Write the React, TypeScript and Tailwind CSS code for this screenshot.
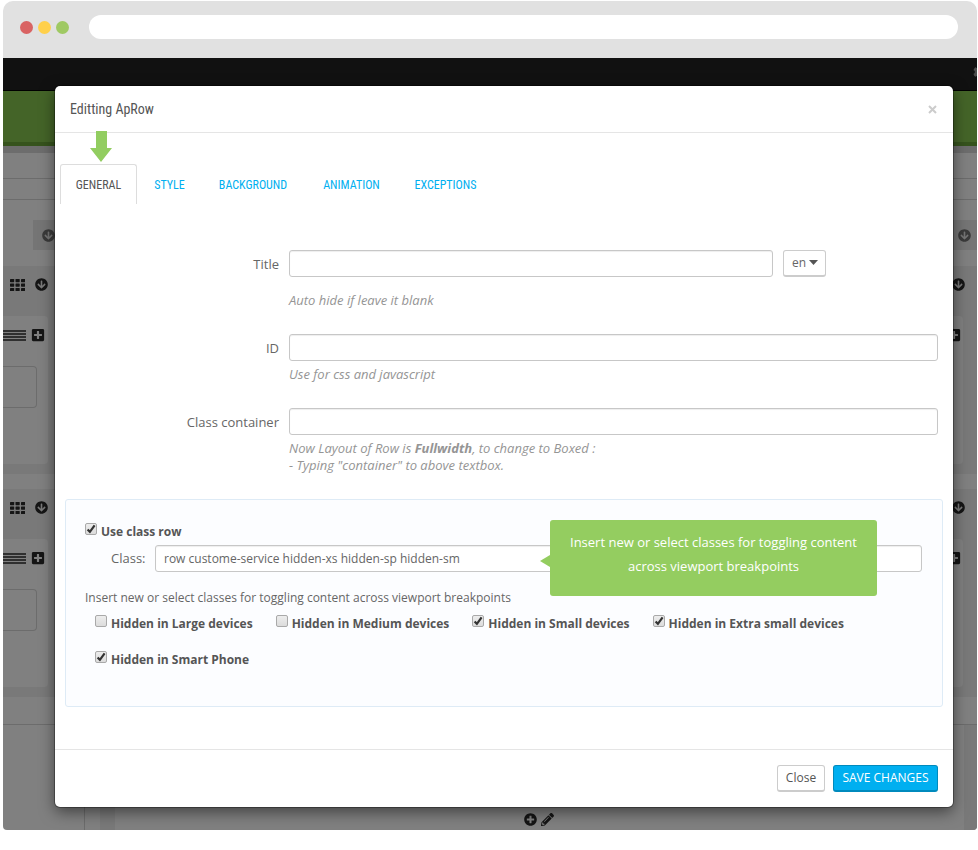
import { useState } from "react";
import type { ReactNode } from "react";
import clsx from "clsx";
import {
  FaArrowCircleDown,
  FaCog,
  FaPencilAlt,
  FaPlusCircle,
  FaPlusSquare,
} from "react-icons/fa";

const tabs = [
  { id: "general", label: "General", width: "w-[77px]" },
  { id: "style", label: "Style", width: "w-[61px]" },
  { id: "background", label: "Background", width: "w-[102px]" },
  { id: "animation", label: "Animation", width: "w-[91px]" },
  { id: "exceptions", label: "Exceptions", width: "w-[93px]" },
];

const breakpoints = [
  { id: "hidden-lg", label: "Hidden in Large devices", checked: false },
  { id: "hidden-md", label: "Hidden in Medium devices", checked: false },
  { id: "hidden-sm", label: "Hidden in Small devices", checked: true },
  { id: "hidden-xs", label: "Hidden in Extra small devices", checked: true },
  { id: "hidden-sp", label: "Hidden in Smart Phone", checked: true },
];

const condensed =
  "font-['Ubuntu_Condensed','Roboto_Condensed','Open_Sans_Condensed','Liberation_Sans_Narrow',sans-serif]";

const inputClass =
  "h-[27px] w-full rounded-[3px] border border-[#c7c7c7] bg-white px-2 text-[12px] text-[#666] shadow-[inset_0_1px_1px_rgba(0,0,0,0.07)] outline-none focus:border-[#66afe9]";

const GridIcon = () => (
  <svg viewBox="0 0 15 12" className="h-3 w-[15px]" fill="currentColor" aria-hidden="true">
    {[0, 5.5, 11].map((x) =>
      [0, 4.5, 9].map((y) => (
        <rect key={`${x}-${y}`} x={x} y={y} width="4.2" height="3.2" rx="0.6" />
      )),
    )}
  </svg>
);

const DragLines = () => (
  <span className="flex w-[23px] flex-col gap-px" aria-hidden="true">
    <span className="h-0.5 bg-[#303030]" />
    <span className="h-0.5 bg-[#303030]" />
    <span className="h-0.5 bg-[#303030]" />
    <span className="h-0.5 bg-[#303030]" />
  </span>
);

const CheckBox = ({
  id,
  label,
  defaultChecked,
}: {
  id: string;
  label: string;
  defaultChecked: boolean;
}) => (
  <div className="flex items-start gap-1">
    <span className="relative block h-3 w-3">
      <input
        id={id}
        type="checkbox"
        defaultChecked={defaultChecked}
        className="peer block h-3 w-3 appearance-none rounded-[2px] border border-[#a9a9a9] bg-linear-to-b from-[#ededed] to-[#dcdcdc]"
      />
      <svg
        viewBox="0 0 12 12"
        className="pointer-events-none absolute inset-0 hidden h-3 w-3 peer-checked:block"
        fill="none"
        stroke="#333"
        strokeWidth="2.2"
        aria-hidden="true"
      >
        <path d="M2.6 6.4 4.9 8.8 9.6 2.4" />
      </svg>
    </span>
    <label htmlFor={id} className="text-[12px] leading-[18px] font-bold text-[#555]">
      {label}
    </label>
  </div>
);

const Field = ({
  id,
  label,
  help,
  className,
  children,
}: {
  id: string;
  label: string;
  help: ReactNode;
  className?: string;
  children: ReactNode;
}) => (
  <div className={clsx("grid grid-cols-[214px_1fr] gap-x-[10px]", className)}>
    <label htmlFor={id} className="text-right text-[13px] leading-7 text-[#666]">
      {label}
    </label>
    <div>{children}</div>
    <p className="col-start-2 text-[13px] leading-[17px] text-[#959595] italic">{help}</p>
  </div>
);

const BuilderRow = () => (
  <div className="h-[208px] shrink-0 bg-[#797979] pr-[14px] text-[#151515]">
    <div className="flex h-[50px] items-start justify-between pt-3">
      <div className="flex items-center gap-[10px] pl-[7px]">
        <GridIcon />
        <FaArrowCircleDown className="size-[13px]" />
      </div>
      <FaArrowCircleDown className="mr-[-2px] size-[13px]" />
    </div>
    <div className="flex h-[148px] justify-between">
      <div className="w-[45px] rounded-r-[4px] bg-[#808080] pt-3">
        <div className="flex items-center gap-[5px]">
          <DragLines />
          <FaPlusSquare className="size-[14px]" />
        </div>
        <div className="mt-6 h-[42px] w-[34px] rounded-r-[4px] border border-l-0 border-[#6c6c6c]" />
      </div>
      <div className="flex w-[45px] justify-end rounded-r-[4px] bg-[#808080] pt-3 pr-[2px]">
        <FaPlusSquare className="size-[14px]" />
      </div>
    </div>
  </div>
);

const BuilderBackdrop = () => (
  <div
    className="col-start-1 row-start-1 flex min-h-0 flex-col overflow-hidden rounded-b-[4px] bg-[#808080]"
    aria-hidden="true"
  >
    <div className="flex h-[33px] shrink-0 justify-end border-b border-black bg-[#111] pt-[7px]">
      <FaCog className="mr-[-10px] size-[14px] text-[#4c4c4c]" />
    </div>
    <div className="h-[55px] shrink-0 border-b-4 border-[#36531d] bg-[#446428]" />
    <div className="h-[7px] shrink-0 bg-[#6d6d6d]" />
    <div className="h-[26px] shrink-0 border-b border-[#6c6c6c]" />
    <div className="h-[21px] shrink-0 border-b border-[#6c6c6c]" />
    <div className="mt-5 mb-4 ml-[30px] flex h-[30px] shrink-0 items-center justify-between bg-[#757575] pr-[6px] pl-[9px] text-[#3a3a3a]">
      <FaArrowCircleDown className="size-[13px]" />
      <FaArrowCircleDown className="size-[13px]" />
    </div>
    <BuilderRow />
    <div className="h-[15px] shrink-0" />
    <BuilderRow />
    <div className="h-7 shrink-0 border-b border-[#6c6c6c]" />
    <div className="flex flex-1 pl-[81px]">
      <div className="w-4 border-l border-[#6c6c6c]" />
      <div className="w-[15px] bg-[#797979]" />
      <div className="flex flex-1 items-end justify-center gap-1 pr-[2px] pb-1 text-[#151515]">
        <FaPlusCircle className="size-[13px]" />
        <FaPencilAlt className="size-[13px]" />
      </div>
      <div className="w-[13px] bg-[#797979]" />
    </div>
  </div>
);

export default function App() {
  const [activeTab, setActiveTab] = useState("general");

  return (
    <main className="min-h-screen bg-white pt-px pr-px pb-5 pl-[3px] font-['Open_Sans',sans-serif] text-[#555]">
      <header className="flex h-[57px] items-start rounded-t-[10px] bg-[#e1e1e1] pt-[14px] pr-[19px] pl-[17px]">
        <div className="mt-[6px] mr-5 flex gap-[5px]">
          <span className="size-[13px] rounded-full bg-[#d96363]" />
          <span className="size-[13px] rounded-full bg-[#ffd04b]" />
          <span className="size-[13px] rounded-full bg-[#9fc963]" />
        </div>
        <input
          type="text"
          aria-label="Address"
          className="h-6 min-w-0 flex-1 rounded-full bg-white px-4 text-[13px] outline-none"
        />
      </header>

      <div className="grid">
        <BuilderBackdrop />

        <div
          role="dialog"
          aria-labelledby="dialog-title"
          className="relative col-start-1 row-start-1 mt-7 mr-6 mb-[23px] ml-[52px] rounded-[5px] bg-white shadow-[0_5px_15px_rgba(0,0,0,0.5),0_0_0_1px_rgba(0,0,0,0.3)]"
        >
          <div className="flex h-[47px] items-center justify-between border-b border-[#e5e5e5] pr-4 pl-[15px]">
            <h1 id="dialog-title" className={clsx("text-[14px] leading-5", condensed)}>
              Editting ApRow
            </h1>
            <button type="button" aria-label="Dismiss" className="text-[#ccc]">
              <svg viewBox="0 0 9 9" className="size-[9px]" stroke="currentColor" strokeWidth="2">
                <path d="M1 1 8 8M8 1 1 8" />
              </svg>
            </button>
          </div>

          <svg
            viewBox="0 0 22 31"
            className="absolute top-[45px] left-[35px] h-[31px] w-[22px]"
            fill="#92cd60"
            aria-hidden="true"
          >
            <path d="M6 0H17V17H22L11 31 0 17H6Z" />
          </svg>

          <form onSubmit={(e) => e.preventDefault()}>
            <div role="tablist" className="mt-[31px] ml-[5px] flex gap-[2px]">
              {tabs.map((tab) => (
                <button
                  key={tab.id}
                  type="button"
                  role="tab"
                  aria-selected={activeTab === tab.id}
                  onClick={() => setActiveTab(tab.id)}
                  className={clsx(
                    "h-10 rounded-t-[3px] border border-b-0 text-[12px] uppercase",
                    condensed,
                    tab.width,
                    activeTab === tab.id
                      ? "border-[#ddd] text-[#555]"
                      : "border-transparent text-[#00aff0]",
                  )}
                >
                  {tab.label}
                </button>
              ))}
            </div>

            <div className="mt-[46px] pr-[15px] pl-[10px]">
              <Field id="title" label="Title" help="Auto hide if leave it blank">
                <div className="mb-[15px] flex gap-[10px]">
                  <input id="title" type="text" className={clsx(inputClass, "min-w-0 flex-1")} />
                  <div className="relative mr-28 w-[43px]">
                    <select
                      aria-label="Language"
                      className="block h-[27px] w-full appearance-none rounded-[3px] border border-b-2 border-[#ccc] bg-white pl-2 text-[12px] text-[#666]"
                    >
                      <option>en</option>
                    </select>
                    <svg
                      viewBox="0 0 9 5"
                      className="pointer-events-none absolute top-[10px] right-2 h-[5px] w-[9px]"
                      fill="#555"
                      aria-hidden="true"
                    >
                      <path d="M0 0H9L4.5 5Z" />
                    </svg>
                  </div>
                </div>
              </Field>

              <Field id="row-id" label="ID" help="Use for css and javascript" className="mt-[25px]">
                <input id="row-id" type="text" className={clsx(inputClass, "mb-[5px] block")} />
              </Field>

              <Field
                id="container"
                label="Class container"
                className="mt-[25px]"
                help={
                  <>
                    Now Layout of Row is <b>Fullwidth</b>, to change to Boxed :
                    <br />- Typing "container" to above textbox.
                  </>
                }
              >
                <input id="container" type="text" className={clsx(inputClass, "mb-[5px] block")} />
              </Field>
            </div>

            <section className="mx-[10px] mt-[25px] h-[208px] rounded-[3px] border border-[#deebf6] bg-[#fcfdff] pt-[23px] pr-5 pl-[19px]">
              <CheckBox id="use-class-row" label="Use class row" defaultChecked />

              <div className="relative mt-1 flex items-center gap-[10px] pl-[26px]">
                <label htmlFor="class" className="w-[34px] text-[13px] text-[#666]">
                  Class:
                </label>
                <input
                  id="class"
                  type="text"
                  defaultValue="row custome-service hidden-xs hidden-sp hidden-sm"
                  className={clsx(inputClass, "min-w-0 flex-1")}
                />
                <div
                  role="tooltip"
                  className="absolute top-[-25px] right-[45px] h-[76px] w-[327px] rounded-[3px] bg-[#94cd60] pt-[10px] text-center text-[13px] leading-6 text-white"
                >
                  Insert new or select classes for toggling content
                  <br />
                  across viewport breakpoints
                  <svg
                    viewBox="0 0 10 12"
                    className="absolute top-[35px] right-full h-3 w-[10px]"
                    fill="#94cd60"
                    aria-hidden="true"
                  >
                    <path d="M10 0V12L0 6Z" />
                  </svg>
                </div>
              </div>

              <p className="mt-[17px] text-[12px] leading-[18px] text-[#666]">
                Insert new or select classes for toggling content across viewport breakpoints
              </p>
              <div className="mt-2 ml-[10px] flex flex-wrap gap-x-[23px] gap-y-[18px]">
                {breakpoints.map((item) => (
                  <CheckBox
                    key={item.id}
                    id={item.id}
                    label={item.label}
                    defaultChecked={item.checked}
                  />
                ))}
              </div>
            </section>

            <footer className="mt-[42px] flex h-[58px] justify-end gap-2 border-t border-[#e5e5e5] pt-[15px] pr-[15px]">
              <button
                type="button"
                className="h-[27px] w-12 rounded-[3px] border border-b-2 border-[#ccc] bg-white text-[12px]"
              >
                Close
              </button>
              <button
                type="submit"
                className="h-[27px] w-[105px] rounded-[3px] border border-b-2 border-[#008abd] bg-[#00aff0] text-[12px] text-white uppercase"
              >
                Save changes
              </button>
            </footer>
          </form>
        </div>
      </div>
    </main>
  );
}
